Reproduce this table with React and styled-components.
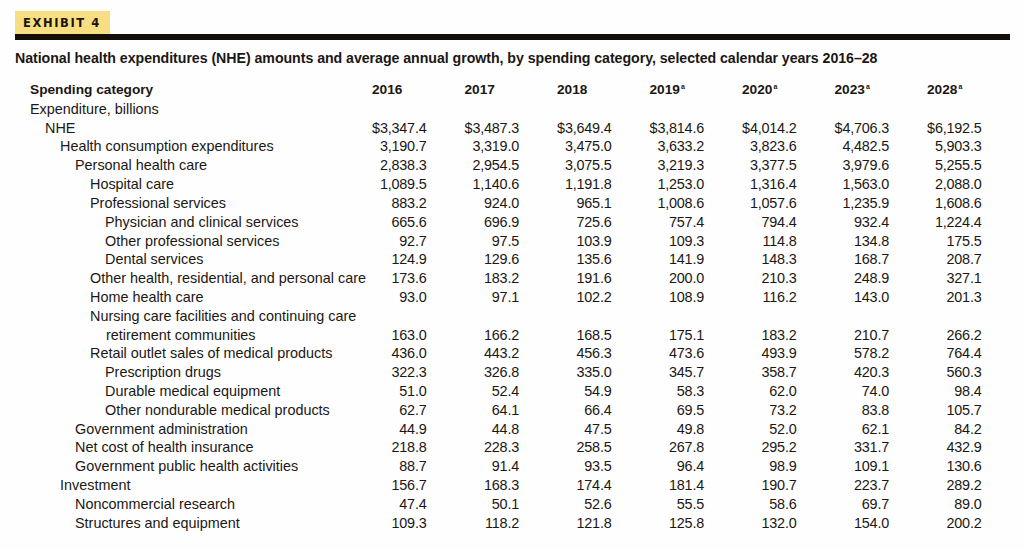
import React from 'react'
import styled, { createGlobalStyle } from 'styled-components'

const GlobalStyle = createGlobalStyle`
    * { box-sizing: border-box; }
    body {
        margin: 0;
        background-color: #fefefe;
        color: #1b1714;
        font-family: "Liberation Sans", Arial, sans-serif;
    }
`

const years = [
    { label: '2016' },
    { label: '2017' },
    { label: '2018' },
    { label: '2019', note: true },
    { label: '2020', note: true },
    { label: '2023', note: true },
    { label: '2028', note: true },
]

const rows = [
    { name: 'Expenditure, billions', level: 0 },
    { name: 'NHE', level: 1, values: ['$3,347.4', '$3,487.3', '$3,649.4', '$3,814.6', '$4,014.2', '$4,706.3', '$6,192.5'] },
    { name: 'Health consumption expenditures', level: 2, values: ['3,190.7', '3,319.0', '3,475.0', '3,633.2', '3,823.6', '4,482.5', '5,903.3'] },
    { name: 'Personal health care', level: 3, values: ['2,838.3', '2,954.5', '3,075.5', '3,219.3', '3,377.5', '3,979.6', '5,255.5'] },
    { name: 'Hospital care', level: 4, values: ['1,089.5', '1,140.6', '1,191.8', '1,253.0', '1,316.4', '1,563.0', '2,088.0'] },
    { name: 'Professional services', level: 4, values: ['883.2', '924.0', '965.1', '1,008.6', '1,057.6', '1,235.9', '1,608.6'] },
    { name: 'Physician and clinical services', level: 5, values: ['665.6', '696.9', '725.6', '757.4', '794.4', '932.4', '1,224.4'] },
    { name: 'Other professional services', level: 5, values: ['92.7', '97.5', '103.9', '109.3', '114.8', '134.8', '175.5'] },
    { name: 'Dental services', level: 5, values: ['124.9', '129.6', '135.6', '141.9', '148.3', '168.7', '208.7'] },
    { name: 'Other health, residential, and personal care', level: 4, values: ['173.6', '183.2', '191.6', '200.0', '210.3', '248.9', '327.1'] },
    { name: 'Home health care', level: 4, values: ['93.0', '97.1', '102.2', '108.9', '116.2', '143.0', '201.3'] },
    { name: 'Nursing care facilities and continuing care', more: 'retirement communities', level: 4, values: ['163.0', '166.2', '168.5', '175.1', '183.2', '210.7', '266.2'] },
    { name: 'Retail outlet sales of medical products', level: 4, values: ['436.0', '443.2', '456.3', '473.6', '493.9', '578.2', '764.4'] },
    { name: 'Prescription drugs', level: 5, values: ['322.3', '326.8', '335.0', '345.7', '358.7', '420.3', '560.3'] },
    { name: 'Durable medical equipment', level: 5, values: ['51.0', '52.4', '54.9', '58.3', '62.0', '74.0', '98.4'] },
    { name: 'Other nondurable medical products', level: 5, values: ['62.7', '64.1', '66.4', '69.5', '73.2', '83.8', '105.7'] },
    { name: 'Government administration', level: 3, values: ['44.9', '44.8', '47.5', '49.8', '52.0', '62.1', '84.2'] },
    { name: 'Net cost of health insurance', level: 3, values: ['218.8', '228.3', '258.5', '267.8', '295.2', '331.7', '432.9'] },
    { name: 'Government public health activities', level: 3, values: ['88.7', '91.4', '93.5', '96.4', '98.9', '109.1', '130.6'] },
    { name: 'Investment', level: 2, values: ['156.7', '168.3', '174.4', '181.4', '190.7', '223.7', '289.2'] },
    { name: 'Noncommercial research', level: 3, values: ['47.4', '50.1', '52.6', '55.5', '58.6', '69.7', '89.0'] },
    { name: 'Structures and equipment', level: 3, values: ['109.3', '118.2', '121.8', '125.8', '132.0', '154.0', '200.2'] },
]

const App = () => {
    return (
        <Page>
            <GlobalStyle />
            <Badge>EXHIBIT 4</Badge>
            <Rule />
            <Title>
                National health expenditures (NHE) amounts and average annual growth, by spending category, selected calendar years 2016–28
            </Title>
            <Table>
                <HeadCell>Spending category</HeadCell>
                {years.map(y => (
                    <YearCell key={y.label}>
                        {y.label}{y.note && <Note>a</Note>}
                    </YearCell>
                ))}
                {rows.map(r => (
                    <Row key={r.name}>
                        <Label $level={r.level}>
                            {r.name}
                            {r.more && <More>{r.more}</More>}
                        </Label>
                        {years.map((y, i) => (
                            <Value key={y.label}>{r.values ? r.values[i] : ''}</Value>
                        ))}
                    </Row>
                ))}
            </Table>
        </Page>
    )
}

const Page = styled.div`
    width: 1024px;
    height: 549px;
    padding: 11px 14px 0 15px;
    overflow: hidden;
`

const Badge = styled.div`
    display: inline-flex;
    align-items: center;
    height: 23px;
    padding: 1px 9px 0 8px;
    background-color: #f7de82;
    color: #1a130e;
    font-family: "DejaVu Sans", "Liberation Sans", sans-serif;
    font-weight: 700;
    font-size: 11.5px;
    letter-spacing: 1.6px;
`

const Rule = styled.div`
    width: 995px;
    height: 6px;
    background-color: #140d09;
`

const Title = styled.h1`
    margin: 9px 0 0;
    font-size: 14.2px;
    line-height: 18px;
    font-weight: 700;
    letter-spacing: -0.05px;
    white-space: nowrap;
`

const Table = styled.div`
    display: grid;
    grid-template-columns: 304px repeat(7, 92.5px);
    margin: 14px 0 0 15px;
    font-size: 14.4px;
    line-height: 18.82px;
`

const HeadCell = styled.div`
    font-weight: 700;
    font-size: 13.7px;
    white-space: nowrap;
`

const YearCell = styled.div`
    font-weight: 700;
    font-size: 13.7px;
    padding-left: 38px;
    white-space: nowrap;
`

const Note = styled.sup`
    font-size: 7px;
    font-weight: 700;
    line-height: 0;
    vertical-align: 5px;
    margin-left: 1px;
`

const Row = styled.div`
    display: contents;
`

const Label = styled.div`
    padding-left: ${p => p.$level * 15}px;
    white-space: nowrap;
`

const More = styled.div`
    padding-left: 16px;
`

const Value = styled.div`
    text-align: right;
    align-self: end;
    white-space: nowrap;
    letter-spacing: -0.2px;
`

export default App
